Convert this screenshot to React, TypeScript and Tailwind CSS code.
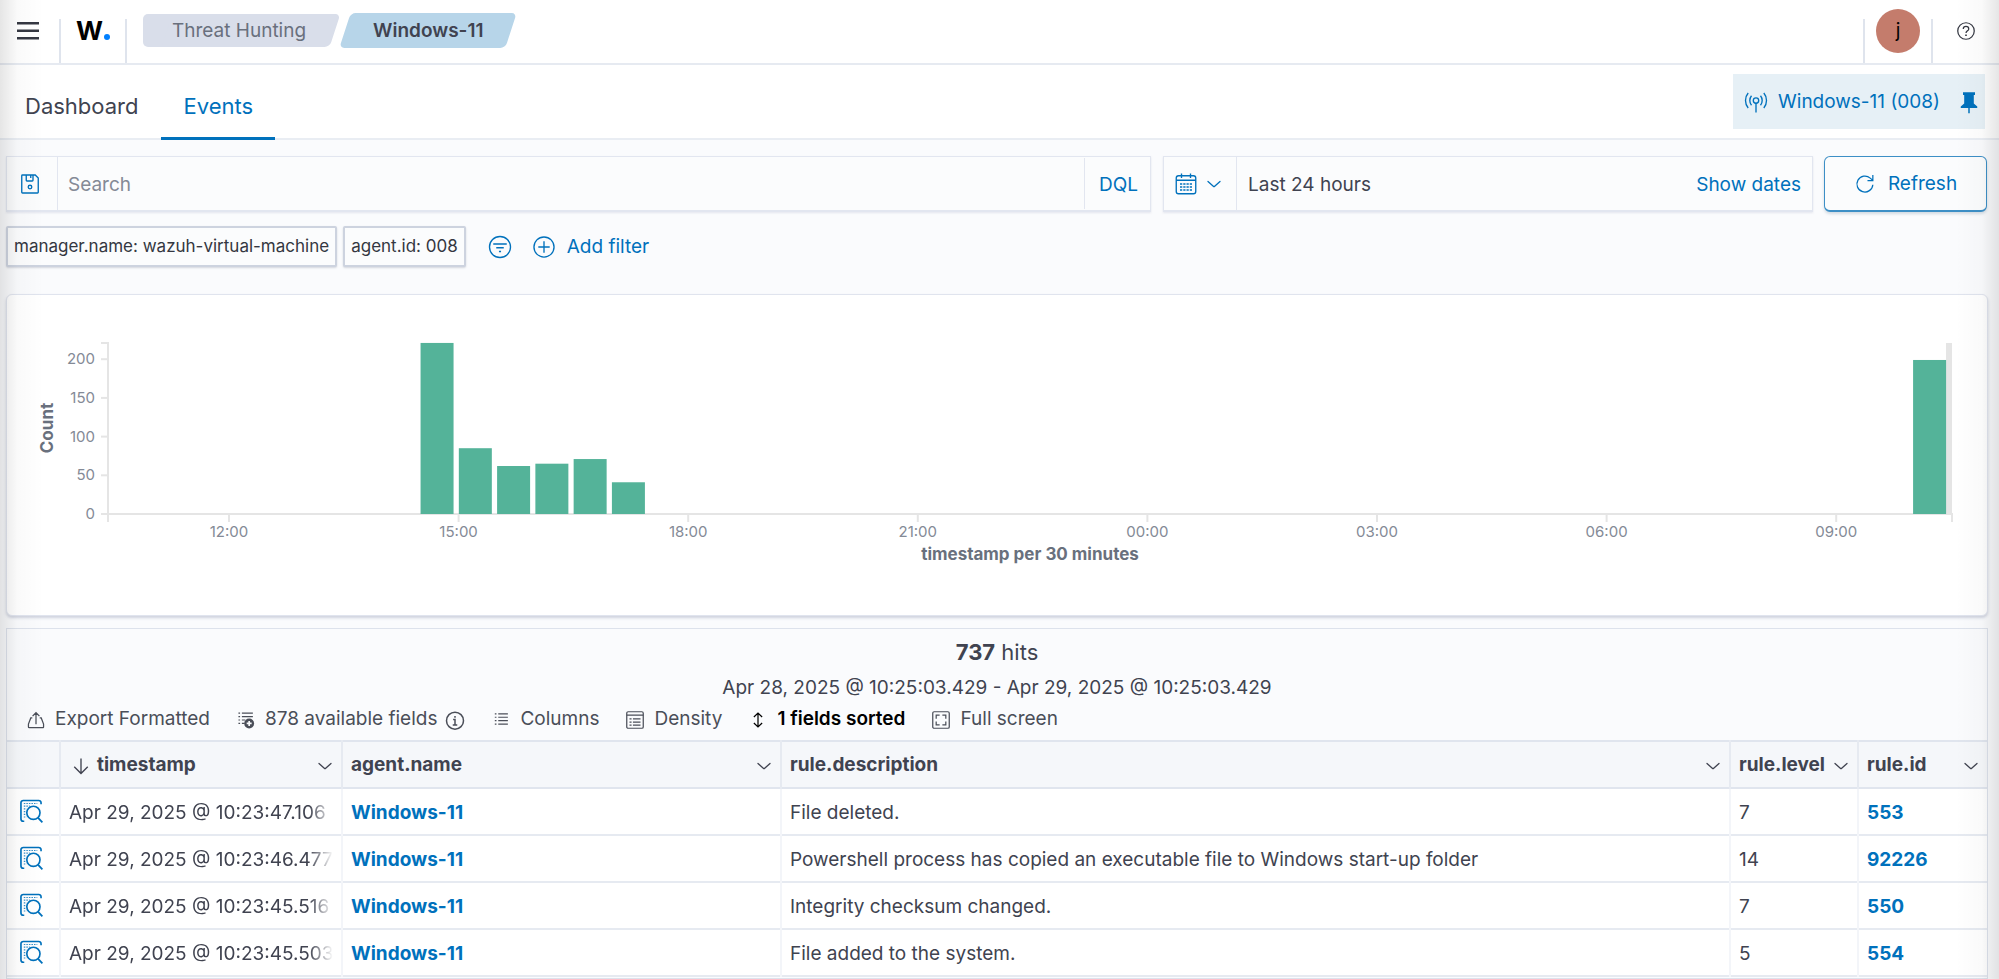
import type { ReactNode } from "react";

const TEXT_LINK = "text-[#0071bc]";

interface IconProps {
  children: ReactNode;
  className?: string;
}

// All icons share a 16 unit grid, shown at 22px unless told otherwise.
function Icon({ children, className = "size-[22px]" }: IconProps) {
  return (
    <svg
      viewBox="0 0 16 16"
      fill="none"
      stroke="currentColor"
      strokeWidth="0.9"
      className={`shrink-0 ${className}`}
      aria-hidden="true"
    >
      {children}
    </svg>
  );
}

const ChevronDown = ({ className = "size-4" }: { className?: string }) => (
  <Icon className={className}>
    <path d="M2 5.5l5.3 4.8a1 1 0 0 0 1.4 0L14 5.5" strokeLinecap="round" strokeWidth="1.3" />
  </Icon>
);

const InspectIcon = () => (
  <Icon className="size-6">
    <path d="M3.500 14.800H2.800A1.500 1.500 0 0 1 1.300 13.300V2.500A1.500 1.500 0 0 1 2.800 1h10.400A1.500 1.500 0 0 1 14.700 2.500V3.500" strokeWidth="1.100" />
    <path d="M3.200 3h9M3.200 4.800h4M3.200 6.600h1.800M3.200 8.400h1.200M3.200 10.200h1.200M3.200 12h1.800" strokeDasharray="1 .7" strokeWidth=".8" opacity=".8" />
    <circle cx="9.600" cy="9.200" r="4.400" strokeWidth="1.100" />
    <path d="M12.600 12.400l3 3.200" strokeWidth="1.200" />
  </Icon>
);

const toolbar = [
  {
    label: "Export Formatted",
    icon: <path d="M5.300 6.500H4.200L2.500 11v2a.6.6 0 0 0 .6.6h9.800a.6.6 0 0 0 .6-.6v-2L11.800 6.500h-1.100M8 11V2.800M5.500 5.200L8 2.700l2.500 2.500" />,
  },
  {
    label: "878 available fields",
    info: true,
    icon: (
      <>
        <path d="M2.500 3h1.200M2.500 5.500h1.200M2.500 8h1.200M2.500 10.500h1.200M5 3h8M5 5.500h8M5 8h2.500M5 10.500h2" />
        <circle cx="10.300" cy="10.500" r="3.600" fill="currentColor" stroke="none" />
        <path d="M10.300 8.700v3.600M8.500 10.500h3.600" stroke="#fafbfd" strokeWidth="1.200" />
      </>
    ),
  },
  {
    label: "Columns",
    icon: <path d="M3.500 3.500h1.200M3.500 6h1.200M3.500 8.500h1.200M3.500 11h1.200M6 3.500h7M6 6h7M6 8.500h7M6 11h7" />,
  },
  {
    label: "Density",
    icon: (
      <>
        <rect x="2" y="2" width="12" height="12" rx="1" />
        <path d="M2 4.500h12M4 7.200h1.500M4 9.500h1.500M4 11.800h1.500M6.500 7.200h5.500M6.500 9.500h5.500M6.500 11.800h5.500" />
      </>
    ),
  },
  {
    label: "1 fields sorted",
    active: true,
    icon: <path d="M8 3.200v9.600M5 5.800L8 3l3 2.800M5 10.200L8 13l3-2.800" />,
  },
  {
    label: "Full screen",
    icon: (
      <>
        <rect x="2" y="2" width="12" height="12" rx="1" />
        <path d="M4.500 7V4.500H7M9 4.500h2.500V7M11.500 9v2.500H9M7 11.500H4.500V9" />
      </>
    ),
  },
];

const columns = ["timestamp", "agent.name", "rule.description", "rule.level", "rule.id"];

const rows = [
  { time: "Apr 29, 2025 @ 10:23:47.106", agent: "Windows-11", description: "File deleted.", level: 7, id: "553" },
  {
    time: "Apr 29, 2025 @ 10:23:46.477",
    agent: "Windows-11",
    description: "Powershell process has copied an executable file to Windows start-up folder",
    level: 14,
    id: "92226",
  },
  { time: "Apr 29, 2025 @ 10:23:45.516", agent: "Windows-11", description: "Integrity checksum changed.", level: 7, id: "550" },
  { time: "Apr 29, 2025 @ 10:23:45.503", agent: "Windows-11", description: "File added to the system.", level: 5, id: "554" },
];

// slot = half-hour bucket, counted from 10:30
const buckets = [
  { slot: 8, count: 221 },
  { slot: 9, count: 85 },
  { slot: 10, count: 62 },
  { slot: 11, count: 65 },
  { slot: 12, count: 71 },
  { slot: 13, count: 41 },
  { slot: 47, count: 199 },
];

const hours = ["12:00", "15:00", "18:00", "21:00", "00:00", "03:00", "06:00", "09:00"];

function Histogram() {
  const left = 101;
  const right = 1945;
  const base = 219;
  const slotWidth = 38.27;
  const y = (count: number) => base - count * 0.774;

  return (
    <svg viewBox="0 0 1980 320" className="block w-full" role="img" aria-label="Count, timestamp per 30 minutes">
      <rect x={right - 6} y="48" width="6" height="171" fill="#e5e5e5" />
      <g stroke="#e5e5e5" strokeWidth="2" fill="none">
        <path d={`M${left - 7} 48H${left}V${base + 8}M${left} ${base}H${right}V${base + 8}`} />
        {[0, 50, 100, 150, 200].map((n) => (
          <path key={n} d={`M${left - 7} ${y(n)}H${left}`} />
        ))}
        {hours.map((h, i) => (
          <path key={h} d={`M${222 + i * 229.6} ${base}v8`} />
        ))}
      </g>
      {buckets.map((b) => (
        <rect
          key={b.slot}
          x={107.4 + b.slot * slotWidth}
          y={y(b.count)}
          width="33"
          height={base - y(b.count)}
          fill="#54b399"
        />
      ))}
      <g fill="#848a96" fontSize="15">
        {[0, 50, 100, 150, 200].map((n) => (
          <text key={n} x="88" y={y(n) + 5} textAnchor="end">
            {n}
          </text>
        ))}
        {hours.map((h, i) => (
          <text key={h} x={222 + i * 229.6} y="242" textAnchor="middle">
            {h}
          </text>
        ))}
      </g>
      <g fill="#69707d" fontSize="17" fontWeight="700" textAnchor="middle">
        <text x="1023" y="265">
          timestamp per 30 minutes
        </text>
        <text transform="translate(46 133) rotate(-90)">Count</text>
      </g>
    </svg>
  );
}

function Header() {
  return (
    <header className="flex h-[65px] items-start border-b-2 border-[#e6eaf1] bg-white">
      <button className="flex h-[62px] w-[59px] items-center pl-[17px]" aria-label="Menu">
        <svg viewBox="0 0 22 18" className="h-[18px] w-[22px]" fill="#343741" aria-hidden="true">
          <path d="M0 0h22v2.500H0zM0 7.500h22v2.500H0zM0 15h22v2.500H0z" />
        </svg>
      </button>
      <div className="mt-[19px] flex h-11 w-[68px] items-start justify-center border-x-2 border-[#dfe4ed]">
        <a href="#home" className="flex items-baseline text-[26px] leading-6 font-bold text-black" aria-label="Home">
          W<span className="ml-px size-[6px] rounded-full bg-[#0080ff]" />
        </a>
      </div>
      <nav aria-label="Breadcrumb" className="mt-[13px] ml-4 flex h-[35px] gap-[10px] text-[19px] leading-[36px]">
        <a
          href="#threat-hunting"
          className="relative isolate px-[29px] text-[#69707d] before:absolute before:inset-y-px before:right-6 before:left-0 before:-z-10 before:rounded-l-[5px] before:bg-[#d9deea] after:absolute after:inset-y-px after:right-0 after:left-6 after:-z-10 after:-skew-x-[18deg] after:rounded-r-[5px] after:bg-[#d9deea]"
        >
          Threat Hunting
        </a>
        <span
          aria-current="page"
          className="relative isolate px-7 font-semibold text-[#404350] before:absolute before:inset-0 before:-z-10 before:-skew-x-[18deg] before:rounded-[5px] before:bg-[#b7d5e9]"
        >
          Windows-11
        </span>
      </nav>
      <div className="mt-[19px] ml-auto flex h-11 w-[70px] justify-center border-x-2 border-[#dfe4ed]">
        <button className="-mt-[10px] size-11 rounded-full bg-[#c47c6c] text-[19px] text-black">j</button>
      </div>
      <button className="flex h-[62px] w-[66px] items-center justify-center text-[#343741]" aria-label="Help">
        <Icon>
          <circle cx="8" cy="8" r="6" />
          <path d="M6 6.600C6 5.400 6.900 4.700 8 4.700s2 .7 2 1.800c0 1.300-2 1.500-2 3" />
          <path d="M8 10.500v1.200" strokeWidth="1.200" />
        </Icon>
      </button>
    </header>
  );
}

function Tabs() {
  return (
    <div className="flex h-[75px] items-start border-b-2 border-[#e9edf3] bg-white pr-[14px]">
      <div role="tablist" className="flex h-[75px] text-[22px] text-[#404350]">
        <button role="tab" aria-selected="false" className="border-b-3 border-transparent pt-[10px] pr-[23px] pl-[25px]">
          Dashboard
        </button>
        <button role="tab" aria-selected="true" className={`border-b-3 border-[#0071bc] px-[22px] pt-[10px] ${TEXT_LINK}`}>
          Events
        </button>
      </div>
      <div className={`mt-[9px] ml-auto flex h-[55px] items-center bg-[#e6f0f6] pr-1 pl-[11px] text-[19px] ${TEXT_LINK}`}>
        <button className="flex items-center gap-[10px] pt-px">
          <Icon className="size-6">
            <circle cx="8" cy="7" r="1.800" />
            <path d="M8 8.800V15M5 3.800c-1.500 1.800-1.500 4.600 0 6.400M11 3.800c1.500 1.800 1.500 4.600 0 6.400M2.800 2c-2.400 2.800-2.400 7.200 0 10M13.200 2c2.400 2.800 2.400 7.200 0 10" />
          </Icon>
          Windows-11 (008)
        </button>
        <button className="ml-[17px]" aria-label="Unpin agent">
          <Icon className="size-6">
            <path d="M4 1.500h8v1.800h-.8V9l2.300 2v1h-5v3.500h-1V12h-5v-1l2.300-2V3.300H4z" fill="currentColor" stroke="none" />
          </Icon>
        </button>
      </div>
    </div>
  );
}

function QueryBar() {
  const box = "flex h-14 items-stretch border border-b-2 border-[#e2e6f0] bg-[#fbfcfd] shadow-[0_1px_2px_rgba(100,110,150,0.15)]";

  return (
    <div className="flex px-[6px] pr-3 text-[19px]">
      <div className={`${box} min-w-0 flex-1`}>
        <button className={`w-[51px] border-r border-[#e2e6f0] pl-[11px] ${TEXT_LINK}`} aria-label="Saved queries">
          <Icon className="size-6">
            <path d="M2.500 2.500A.5.500 0 0 1 3 2h8.500L13.500 4v9.500a.5.500 0 0 1-.5.500H3a.5.500 0 0 1-.5-.5zM5.500 2v3.500a.5.500 0 0 0 .5.500h3.500a.5.500 0 0 0 .5-.5V2M8.500 2v2" />
            <circle cx="8" cy="10" r="1.200" />
          </Icon>
        </button>
        <input
          aria-label="Search"
          placeholder="Search"
          className="min-w-0 flex-1 pt-[3px] pl-[10px] text-[#404350] outline-none placeholder:text-[#848a96]"
        />
        <button className={`my-px border-l border-[#e2e6f0] pt-[3px] pr-3 pl-[14px] ${TEXT_LINK}`}>DQL</button>
      </div>
      <div className={`${box} ml-3 w-[650px]`}>
        <button className={`flex w-[73px] items-center gap-2 border-r border-[#e2e6f0] pl-[10px] ${TEXT_LINK}`} aria-label="Date quick select">
          <Icon className="size-6">
            <rect x="1.500" y="2.500" width="13" height="12" rx="1.500" />
            <path d="M1.500 5.500h13M5 1v3M11 1v3" />
            <path d="M4 8h8M4 10h8M4 12h8" strokeDasharray="1.500 .67" />
          </Icon>
          <ChevronDown />
        </button>
        <button className="flex-1 pt-[3px] pl-[11px] text-left text-[#404350]">Last 24 hours</button>
        <button className={`px-[11px] pt-[3px] ${TEXT_LINK}`}>Show dates</button>
      </div>
      <button
        className={`ml-[11px] flex h-14 w-[163px] items-center justify-center gap-3 rounded-md border border-b-2 border-[#3d8fc6] bg-[#fbfcfd] pt-px shadow-[0_2px_3px_rgba(54,97,126,0.2)] ${TEXT_LINK}`}
      >
        <Icon>
          <path d="M13.700 8.500A5.800 5.800 0 1 1 11.800 3.700L13.500 5.200M13.700 1.500v4H9.800" />
        </Icon>
        Refresh
      </button>
    </div>
  );
}

function FilterBar() {
  const pill = "h-[41px] rounded-xs border-2 border-[#cdd3df] bg-[#fbfcfd] px-[6px] text-[17px] text-[#343741] shadow-[0_1px_2px_rgba(100,110,130,0.25)]";

  return (
    <div className="flex items-center gap-[6px] pl-[6px]">
      <button className={pill}>manager.name: wazuh-virtual-machine</button>
      <button className={pill}>agent.id: 008</button>
      <button className={`ml-4 ${TEXT_LINK}`} aria-label="Filter options">
        <Icon className="size-6">
          <circle cx="8" cy="8" r="7" />
          <path d="M3.500 6h9M5.500 8.500h5M7.300 11h1.400" />
        </Icon>
      </button>
      <button className={`ml-[14px] flex items-center gap-[11px] pt-px text-[19px] ${TEXT_LINK}`}>
        <Icon className="size-6">
          <circle cx="8" cy="8" r="6.700" />
          <path d="M8 4.200v7.600M4.200 8h7.600" />
        </Icon>
        Add filter
      </button>
    </div>
  );
}

function EventsTable() {
  const cell = "border-l-2 border-[#f3f5f9] px-2 pt-[3px]";

  return (
    <table className="w-full table-fixed border-collapse text-left text-[19px] text-[#404350]">
      <colgroup>
        <col className="w-[53px]" />
        <col className="w-[282px]" />
        <col className="w-[439px]" />
        <col />
        <col className="w-[128px]" />
        <col className="w-[129px]" />
      </colgroup>
      <thead>
        <tr className="h-[47px] border-y-2 border-[#e0e5ee] bg-[#f5f7fa]">
          <th aria-label="Inspect" />
          {columns.map((name) => (
            <th key={name} className="border-l-2 border-[#e6eaf1] px-2 pt-[2px] font-bold">
              <button className="flex w-full items-center">
                {name === "timestamp" && (
                  <Icon className="mr-1 size-6">
                    <path d="M8 3v10M3.500 8.500L8 13l4.500-4.500" />
                  </Icon>
                )}
                {name}
                <ChevronDown className="ml-auto size-4" />
              </button>
            </th>
          ))}
        </tr>
      </thead>
      <tbody>
        {rows.map((row) => (
          <tr key={row.time} className="h-[47px] border-b-2 border-[#e6eaf1] bg-white">
            <td className={`pb-[2px] pl-3 ${TEXT_LINK}`}>
              <button className="block" aria-label="Inspect document details">
                <InspectIcon />
              </button>
            </td>
            <td className={cell}>
              <div className="whitespace-nowrap [mask-image:linear-gradient(to_right,black_calc(100%-24px),transparent)]">
                {row.time}
              </div>
            </td>
            <td className={cell}>
              <a href="#agent" className={`font-bold ${TEXT_LINK}`}>
                {row.agent}
              </a>
            </td>
            <td className={`truncate ${cell}`}>{row.description}</td>
            <td className={cell}>{row.level}</td>
            <td className={cell}>
              <a href="#rule" className={`font-bold ${TEXT_LINK}`}>
                {row.id}
              </a>
            </td>
          </tr>
        ))}
      </tbody>
    </table>
  );
}

export default function App() {
  return (
    <div className="flex min-h-screen flex-col bg-[#fafbfd] font-[Inter,'Liberation_Sans',sans-serif]">
      <Header />
      <Tabs />
      <main className="flex flex-1 flex-col pt-4">
        <QueryBar />
        <div className="mt-[14px]">
          <FilterBar />
        </div>

        <section className="mt-[27px] mr-[11px] ml-[6px] rounded-md border border-[#e0e4ee] bg-white shadow-[0_2px_3px_rgba(80,90,130,0.25)]">
          <Histogram />
        </section>

        <section className="mt-3 mr-[11px] ml-[6px] flex-1 border border-[#dde2ec]">
          <div className="pt-2 text-center text-[#404350]">
            <h2 className="text-[22px] leading-[30px]">
              <strong className="font-bold">737</strong> hits
            </h2>
            <p className="mt-[6px] text-[19px] leading-[30px]">
              Apr 28, 2025 @ 10:25:03.429 - Apr 29, 2025 @ 10:25:03.429
            </p>
          </div>
          <div className="flex h-[37px] items-center gap-[25px] pb-1 pl-[18px] text-[19px]">
            {toolbar.map((item) => (
              <button
                key={item.label}
                className={`flex items-center gap-2 ${item.active ? "font-semibold text-black" : "text-[#4a4e58]"}`}
              >
                <Icon>{item.icon}</Icon>
                {item.label}
                {item.info && (
                  <Icon className="size-5">
                    <circle cx="8" cy="8.500" r="6.800" strokeWidth="1.200" />
                    <path d="M6.500 7.500H8V12M6.200 12h3.600M8 4.800v1.400" strokeWidth="1.200" />
                  </Icon>
                )}
              </button>
            ))}
          </div>
          <EventsTable />
        </section>
      </main>

      {/* soft shade along both window edges */}
      <div className="pointer-events-none absolute inset-y-0 left-0 w-11 bg-linear-to-r from-black/10 via-black/2 via-40% to-transparent" />
      <div className="pointer-events-none absolute inset-y-0 right-0 w-11 bg-linear-to-l from-black/10 via-black/2 via-40% to-transparent" />
    </div>
  );
}
